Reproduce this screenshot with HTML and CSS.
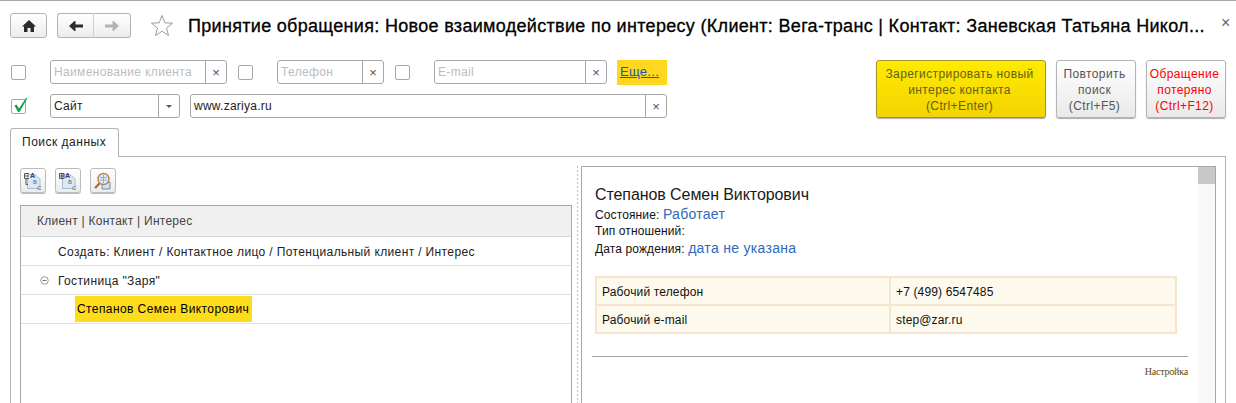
FILE: index.html
```html
<!DOCTYPE html>
<html lang="ru">
<head>
  <meta charset="utf-8">
  <title>Принятие обращения</title>
  <link rel="stylesheet" href="styles.css">
</head>
<body>
<div class="page">

  <div class="topbar">
    <button class="nav-btn home">
      <svg width="14" height="12" viewBox="0 0 14 12"><path d="M7 0 L14 6.5 L12 6.5 L12 12 L8.5 12 L8.5 8 L5.5 8 L5.5 12 L2 12 L2 6.5 L0 6.5 Z" fill="#2b2b2b"/></svg>
    </button>
    <div class="nav-group">
      <button class="nav-btn">
        <svg width="14" height="10" viewBox="0 0 14 10"><path d="M5.5 0 L6.5 0 L6.5 3.5 L14 3.5 L14 6.5 L6.5 6.5 L6.5 10 L5.5 10 L0 5 Z" fill="#2b2b2b"/></svg>
      </button>
      <button class="nav-btn">
        <svg width="14" height="10" viewBox="0 0 14 10"><path d="M8.5 0 L7.5 0 L7.5 3.5 L0 3.5 L0 6.5 L7.5 6.5 L7.5 10 L8.5 10 L14 5 Z" fill="#b4b4b4"/></svg>
      </button>
    </div>
    <svg class="star" width="24" height="23" viewBox="0 0 24 23"><path d="M12 1.5 L14.8 8.8 L22.5 9.2 L16.5 14 L18.5 21.5 L12 17.3 L5.5 21.5 L7.5 14 L1.5 9.2 L9.2 8.8 Z" fill="#fff" stroke="#9a9a9a"/></svg>
    <h1 class="title">Принятие обращения: Новое взаимодействие по интересу (Клиент: Вега-транс | Контакт: Заневская Татьяна Никол...</h1>
    <span class="close">×</span>
  </div>

  <div class="commands">
    <div class="filters">
      <div class="filter-row">
        <span class="check"></span>
        <div class="field w-name"><span class="value hint">Наименование клиента</span><span class="field-btn">×</span></div>
        <span class="check gap-check"></span>
        <div class="field w-phone"><span class="value hint">Телефон</span><span class="field-btn">×</span></div>
        <span class="check gap-check"></span>
        <div class="field w-mail"><span class="value hint">E-mail</span><span class="field-btn">×</span></div>
        <a class="more" href="#">Еще...</a>
      </div>
      <div class="filter-row">
        <span class="check">
          <svg width="17" height="17" viewBox="0 0 17 17"><path d="M2.5 8.5 L4.5 7.5 L7 11.5 L14 1 L15.5 1 L7.5 15 L6 15 Z" fill="#10a040"/></svg>
        </span>
        <div class="field w-site"><span class="value">Сайт</span><span class="field-btn"><i class="caret"></i></span></div>
        <div class="field w-url"><span class="value">www.zariya.ru</span><span class="field-btn">×</span></div>
      </div>
    </div>
    <div class="actions">
      <button class="action primary">Зарегистрировать новый<br>интерес контакта<br>(Ctrl+Enter)</button>
      <button class="action">Повторить<br>поиск<br>(Ctrl+F5)</button>
      <button class="action danger">Обращение<br>потеряно<br>(Ctrl+F12)</button>
    </div>
  </div>

  <div class="tabs"><div class="tab">Поиск данных</div><div class="tab-rest"></div></div>

  <div class="panel">
    <div class="left">
      <div class="tools">
        <button class="tool">
          <svg width="20" height="20" viewBox="0 0 20 20">
            <path d="M4.5 3.5 H12 L17 8 V17.5 H4.5 Z" fill="#dbe8f5" stroke="#a9bdd0"/>
            <path d="M1.5 2.5 H6 M1.5 5 H6 M1.5 7.5 H6 M1.5 2.5 V7.5 M3 7.5 V13.5 H5" fill="none" stroke="#555"/>
            <text x="7" y="7" class="icon-a">A</text><text x="10" y="13" class="icon-b">B</text><text x="14" y="19" class="icon-b">C</text>
          </svg>
        </button>
        <button class="tool">
          <svg width="20" height="20" viewBox="0 0 20 20">
            <path d="M4.5 3.5 H12 L17 8 V17.5 H4.5 Z" fill="#dbe8f5" stroke="#a9bdd0"/>
            <path d="M1.5 2.5 H6 V7.5 H1.5 Z M3.7 2.5 V7.5 M1.5 5 H6" fill="none" stroke="#555"/>
            <text x="7" y="7" class="icon-a">A</text><text x="10" y="13" class="icon-b">B</text><text x="14" y="19" class="icon-b">C</text>
          </svg>
        </button>
        <button class="tool">
          <svg width="20" height="20" viewBox="0 0 20 20">
            <path d="M9 11 H17 V18 H9 Z" fill="#cfe0f0" stroke="#6c8fb0"/>
            <circle cx="10.5" cy="8" r="5.5" fill="#dcebf7" stroke="#b9824a" stroke-width="1.4"/>
            <path d="M7 6.5 H14 M7 9 H14 M10.5 4 V12" stroke="#8fb2d2"/>
            <path d="M6.5 12.5 L2 17" stroke="#b9682a" stroke-width="2.4"/>
          </svg>
        </button>
      </div>
      <div class="tree">
        <div class="tree-head">Клиент | Контакт | Интерес</div>
        <div class="tree-row lvl-1">Создать: Клиент / Контактное лицо / Потенциальный клиент / Интерес</div>
        <div class="tree-row lvl-1 has-toggle">
          <svg class="toggle" width="9" height="9" viewBox="0 0 9 9"><circle cx="4.5" cy="4.5" r="3.8" fill="none" stroke="#999"/><path d="M2.5 4.5 H6.5" stroke="#777"/></svg>
          <span>Гостиница "Заря"</span>
        </div>
        <div class="tree-row lvl-2"><span class="current">Степанов Семен Викторович</span></div>
      </div>
    </div>

    <div class="splitter"></div>

    <div class="card">
      <div class="card-body">
        <div class="person">Степанов Семен Викторович</div>
        <div class="line">Состояние: <span class="val">Работает</span></div>
        <div class="line">Тип отношений:</div>
        <div class="line">Дата рождения: <span class="val">дата не указана</span></div>
        <table class="contacts">
          <tr><td class="c-name">Рабочий телефон</td><td>+7 (499) 6547485</td></tr>
          <tr><td class="c-name">Рабочий e-mail</td><td>step@zar.ru</td></tr>
        </table>
        <div class="rule"></div>
        <div class="settings">Настройка</div>
      </div>
      <div class="scroll"><div class="thumb"></div></div>
    </div>
  </div>

</div>
</body>
</html>
```

FILE: styles.css
```css
* {
  box-sizing: border-box;
}

html, body {
  margin: 0;
  height: 100%;
  background: #fff;
}

button {
  font: inherit;
  padding: 0;
  margin: 0;
}

.page {
  height: 403px;
  overflow: hidden;
  display: flex;
  flex-flow: column;
  border-top: 1px solid #a8a8a8;
  font-family: "Liberation Sans", Arial, sans-serif;
  font-size: 12px;
  color: #222;
}

/* top line */
.topbar {
  display: flex;
  align-items: center;
  height: 25px;
  margin-top: 12px;
  padding-left: 10px;
  flex: none;
}

.nav-btn {
  display: flex;
  align-items: center;
  justify-content: center;
  width: 37px;
  height: 25px;
  border: 1px solid #b4b4b4;
  border-radius: 3px;
  background: linear-gradient(#fff, #ececec);
}

.nav-group {
  display: flex;
  margin-left: 10px;
}

.nav-group .nav-btn:first-child {
  border-radius: 3px 0 0 3px;
  border-right-color: #d0d0d0;
}

.nav-group .nav-btn:last-child {
  border-radius: 0 3px 3px 0;
  border-left: 0;
}

.star {
  margin-left: 19px;
  flex: none;
}

.title {
  margin: 0 0 0 14px;
  padding-top: 2px;
  font-size: 18px;
  font-weight: normal;
  letter-spacing: 0.31px;
  color: #000;
  white-space: nowrap;
  -webkit-text-stroke: 0.3px #000;
}

.close {
  position: absolute;
  left: 1221px;
  top: 14px;
  font-size: 16px;
  color: #666;
}

/* filters and big buttons */
.commands {
  display: flex;
  justify-content: space-between;
  margin-top: 22px;
  padding: 0 10px 0 11px;
  flex: none;
}

.filters {
  display: flex;
  flex-flow: column;
  gap: 10px;
}

.filter-row {
  display: flex;
  align-items: center;
  height: 24px;
}

.check {
  position: relative;
  width: 15px;
  height: 15px;
  border: 1px solid #a8a8a8;
  border-radius: 2px;
  background: #fff;
  flex: none;
  margin-right: 24px;
}

.check svg {
  position: absolute;
  left: 0;
  top: -3px;
}

.check.gap-check {
  margin-left: 11px;
}

.field {
  display: flex;
  height: 24px;
  border: 1px solid #a8a8a8;
  border-radius: 3px;
  background: #fff;
  flex: none;
}

.value {
  flex: 1;
  padding-left: 3px;
  line-height: 22px;
  letter-spacing: 0.25px;
  white-space: nowrap;
  overflow: hidden;
}

.hint {
  color: #bdbdbd;
  letter-spacing: 0.35px;
}

.field-btn {
  display: flex;
  align-items: center;
  justify-content: center;
  width: 21px;
  border-left: 1px solid #a8a8a8;
  color: #555;
  font-size: 13px;
  flex: none;
}

.caret {
  width: 0;
  height: 0;
  border: 3px solid transparent;
  border-top-color: #555;
  border-bottom: 0;
}

.w-name { width: 177px; }
.w-phone { width: 107px; }
.w-mail { width: 173px; }
.w-site { width: 130px; margin-right: 10px; }
.w-url { width: 477px; }

.more {
  margin-left: 10px;
  width: 50px;
  height: 25px;
  padding-left: 3px;
  line-height: 24px;
  background: #fdd81e;
  color: #1457c0;
  font-size: 13px;
  letter-spacing: 0.3px;
}

.actions {
  display: flex;
  gap: 10px;
}

.action {
  width: 80px;
  height: 58px;
  padding: 2px 3px 0 0;
  border: 1px solid #b4b4b4;
  border-radius: 3px;
  background: linear-gradient(#fff, #e9e9e9);
  box-shadow: 0 1px 1px #aaa;
  color: #555;
  font-size: 12px;
  line-height: 16px;
  letter-spacing: 0.4px;
}

.action.primary {
  width: 170px;
  border-color: #a8922a;
  background: linear-gradient(#ffea00, #f3d400);
  color: #66601c;
}

.action.danger {
  color: #f00;
}

/* tab */
.tabs {
  display: flex;
  margin: 10px 0 0 10px;
  height: 29px;
  flex: none;
}

.tab {
  width: 109px;
  height: 29px;
  padding-left: 11px;
  line-height: 27px;
  border: 1px solid #b4b4b4;
  border-bottom: 0;
  border-radius: 3px 3px 0 0;
  letter-spacing: 0.5px;
}

.tab-rest {
  width: 1107px;
  border-bottom: 1px solid #b4b4b4;
}

.panel {
  display: flex;
  flex: 1;
  min-height: 0;
  margin-left: 10px;
  width: 1216px;
  padding: 9px 9px 0 9px;
  border-left: 1px solid #b4b4b4;
  border-right: 1px solid #b4b4b4;
}

/* left side */
.left {
  width: 552px;
  padding-top: 2px;
  flex: none;
  display: flex;
  flex-flow: column;
}

.tools {
  display: flex;
  gap: 9px;
}

.tool {
  display: flex;
  align-items: center;
  justify-content: center;
  width: 26px;
  height: 25px;
  border: 1px solid #bbb;
  border-radius: 3px;
  background: linear-gradient(#fff, #ececec);
  box-shadow: 0 1px 0 #bbb;
}

.icon-a {
  font: bold 7px "Liberation Sans", sans-serif;
  fill: #1d3f8c;
}

.icon-b {
  font: 6px "Liberation Sans", sans-serif;
  fill: #666;
}

.tree {
  flex: 1;
  margin-top: 12px;
  border: 1px solid #a8a8a8;
  border-bottom: 0;
}

.tree-head {
  height: 31px;
  padding: 1px 0 0 16px;
  line-height: 29px;
  background: #f0f0f0;
  border-bottom: 1px solid #d8d8d8;
  color: #444;
  letter-spacing: 0.25px;
}

.tree-row {
  height: 29px;
  padding-top: 1px;
  display: flex;
  align-items: center;
  border-bottom: 1px solid #e0e0e0;
  letter-spacing: 0.37px;
  white-space: nowrap;
}

.lvl-1 {
  padding-left: 37px;
}

.has-toggle {
  padding-left: 19px;
}

.toggle {
  margin-right: 9px;
}

.lvl-2 {
  padding-left: 54px;
  align-items: flex-start;
}

.current {
  display: block;
  width: 177px;
  height: 26px;
  padding: 0 2px;
  line-height: 26px;
  background: #fddc1c;
  color: #000;
  letter-spacing: 0.41px;
}

/* splitter */
.splitter {
  width: 9px;
  flex: none;
  background: repeating-linear-gradient(#c4c4c4 0 2px, transparent 2px 4px) 5px 0 / 1px 100% no-repeat;
}

/* contact card */
.card {
  flex: 1;
  min-width: 0;
  display: flex;
  border-top: 1px solid #a8a8a8;
  border-left: 1px solid #a8a8a8;
  border-right: 1px solid #a8a8a8;
  color: #111;
}

.card-body {
  flex: 1;
  min-width: 0;
  padding: 18px 9px 0 13px;
}

.person {
  height: 21px;
  font-size: 16px;
  line-height: 20px;
  letter-spacing: -0.08px;
  color: #1a1a1a;
}

.line {
  height: 17px;
  line-height: 17px;
  letter-spacing: 0.12px;
}

.val {
  font-size: 14px;
  letter-spacing: 0.3px;
  color: #3068bd;
}

.contacts {
  width: 582px;
  margin-top: 19px;
  border-collapse: separate;
  border-spacing: 2px;
  background: #f6e5ce;
  font-size: 12px;
  letter-spacing: 0.15px;
}

.contacts td {
  height: 26px;
  padding: 2px 5px 0;
  background: #fdf9ec;
}

.c-name {
  width: 292px;
}

.rule {
  height: 1px;
  margin: 22px 0 0 -3px;
  width: 596px;
  background: #a0a0a0;
}

.settings {
  width: 593px;
  margin-top: 9px;
  text-align: right;
  font-family: "Liberation Serif", serif;
  font-size: 10px;
  letter-spacing: -0.2px;
  color: #5a4a10;
}

.scroll {
  width: 17px;
  flex: none;
  background: #f8f8f8;
}

.thumb {
  height: 17px;
  background: #c8c8c8;
}
```
